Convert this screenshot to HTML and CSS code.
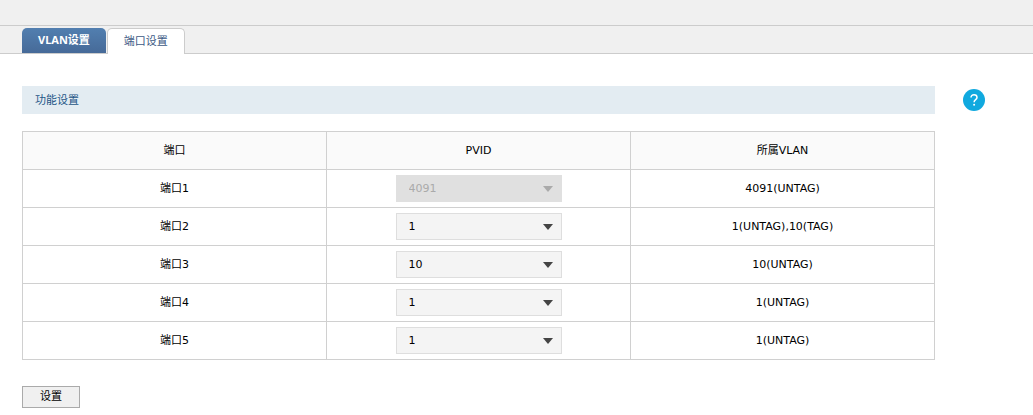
FILE: index.html
```html
<!DOCTYPE html>
<html lang="zh-Hans">
  <head>
    <meta charset="UTF-8" />
    <meta name="viewport" content="width=device-width, initial-scale=1.0" />
    <title>端口设置</title>
    <link rel="stylesheet" href="styles.css">
  </head>
  <body>
    <header class="top-bar"></header>
    <nav class="tabs">
      <a href="#vlan" class="tab">VLAN设置</a>
      <a href="#port" class="tab tab-active">端口设置</a>
    </nav>
    <main class="page">
      <form class="content">
        <h1 class="section-title">功能设置</h1>
        <table class="port-table">
          <thead>
            <tr>
              <th>端口</th>
              <th>PVID</th>
              <th>所属VLAN</th>
            </tr>
          </thead>
          <tbody>
            <tr>
              <td><label for="pvid1">端口1</label></td>
              <td>
                <div class="select-box disabled">
                  <select id="pvid1" disabled>
                    <option selected>4091</option>
                  </select>
                </div>
              </td>
              <td>4091(UNTAG)</td>
            </tr>
            <tr>
              <td><label for="pvid2">端口2</label></td>
              <td>
                <div class="select-box">
                  <select id="pvid2">
                    <option selected>1</option>
                    <option>10</option>
                  </select>
                </div>
              </td>
              <td>1(UNTAG),10(TAG)</td>
            </tr>
            <tr>
              <td><label for="pvid3">端口3</label></td>
              <td>
                <div class="select-box">
                  <select id="pvid3">
                    <option>1</option>
                    <option selected>10</option>
                  </select>
                </div>
              </td>
              <td>10(UNTAG)</td>
            </tr>
            <tr>
              <td><label for="pvid4">端口4</label></td>
              <td>
                <div class="select-box">
                  <select id="pvid4">
                    <option selected>1</option>
                    <option>10</option>
                  </select>
                </div>
              </td>
              <td>1(UNTAG)</td>
            </tr>
            <tr>
              <td><label for="pvid5">端口5</label></td>
              <td>
                <div class="select-box">
                  <select id="pvid5">
                    <option selected>1</option>
                    <option>10</option>
                  </select>
                </div>
              </td>
              <td>1(UNTAG)</td>
            </tr>
          </tbody>
        </table>
        <button type="submit" class="submit-button">设置</button>
      </form>
      <a href="#help" class="help" aria-label="帮助">
        <svg width="22" height="22" viewBox="0 0 22 22">
          <circle cx="11" cy="11" r="11" fill="#10a9df" />
          <path d="M8 8.6C8 6.9 9.2 5.8 11 5.8s3 1.1 3 2.6c0 2.2-2.9 2.4-2.9 4.8" fill="none" stroke="#fff" stroke-width="1.5" />
          <circle cx="11.1" cy="15.8" r="1" fill="#fff" />
        </svg>
      </a>
    </main>
  </body>
</html>
```

FILE: styles.css
```css
body {
  font-family: "DejaVu Sans", "Noto Sans CJK SC", sans-serif;
  font-size: 11px;
  line-height: 16px;
  margin: 0;
  background: #fff;
  color: #000;
}

.top-bar {
  height: 25px;
  background: #f0f0f0;
  border-bottom: 1px solid #ccc;
}

/* 标签页 */
.tabs {
  display: flex;
  gap: 1px;
  padding: 2px 22px 0;
  background: #f0f0f0;
  border-bottom: 1px solid #ccc;
  font-family: "Noto Sans", "Noto Sans CJK SC", sans-serif;
}

.tab {
  box-sizing: border-box;
  height: 25px;
  padding: 4px 16px;
  border-radius: 5px 5px 0 0;
  background: linear-gradient(#527fb0, #466a98);
  color: #fff;
  font-weight: bold;
  text-decoration: none;
}

.tab-active {
  height: 26px;
  margin-bottom: -1px;
  border: 1px solid #ccc;
  border-bottom: none;
  background: #fff;
  color: #3d5a85;
  font-weight: normal;
}

.page {
  display: flex;
  align-items: flex-start;
  gap: 28px;
  padding: 32px 48px 7px 22px;
}

.content {
  flex: 1;
}

.section-title {
  margin: 0 0 17px;
  padding: 7px 13px 5px;
  background: #e3ecf2;
  color: #1f5687;
  font-size: 11px;
  font-weight: normal;
}

/* 端口列表 */
.port-table {
  width: 100%;
  table-layout: fixed;
  border-collapse: collapse;
}

.port-table th,
.port-table td {
  height: 37px;
  padding: 0;
  border: 1px solid #d0d0d0;
  font-weight: normal;
  text-align: center;
}

.port-table th {
  background: #fafafa;
}

.select-box {
  position: relative;
  width: 166px;
  margin: 0 auto;
}

.select-box select {
  display: block;
  appearance: none;
  width: 100%;
  height: 27px;
  padding: 0 12px;
  border: 1px solid #dedede;
  border-radius: 0;
  background: #f4f4f4;
  color: #000;
  font: inherit;
}

.select-box::after {
  content: "";
  position: absolute;
  top: 11px;
  right: 9px;
  border: 5px solid transparent;
  border-top: 6px solid #444;
  border-bottom: none;
  pointer-events: none;
}

.select-box.disabled select {
  border-color: #e0e0e0;
  background: #e0e0e0;
  color: #aaa;
  opacity: 1;
}

.select-box.disabled::after {
  border-top-color: #aaa;
}

.submit-button {
  display: block;
  height: 22px;
  margin-top: 26px;
  padding: 0 17px;
  border: 1px solid #aaa;
  background: #f0f0f0;
  color: #000;
  font: inherit;
}

.help {
  margin-top: 3px;
}

.help svg {
  display: block;
}
```
